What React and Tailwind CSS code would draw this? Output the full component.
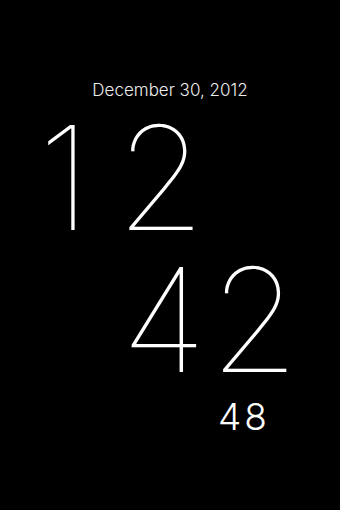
import React from "react";

const font = { fontFamily: "Inter, 'Liberation Sans', sans-serif" };

export default function App() {
  return (
    <div
      className="w-[340px] h-[510px] bg-black text-white flex flex-col overflow-hidden"
      style={font}
    >
      {/* date */}
      <div className="pt-[80px] text-center text-[17px] font-light leading-[20px] text-[#ececec]">
        December 30, 2012
      </div>

      {/* hours */}
      <div className="mt-[23px] pl-[38px] text-[144px] font-thin leading-[110px] tracking-[25px]">
        12
      </div>

      {/* minutes */}
      <div className="mt-[32px] pl-[121px] text-[144px] font-thin leading-[110px] tracking-[3px]">
        42
      </div>

      {/* seconds */}
      <div className="mt-[23px] pl-[218px] text-[37px] font-light leading-none tracking-[3px]">
        48
      </div>
    </div>
  );
}
